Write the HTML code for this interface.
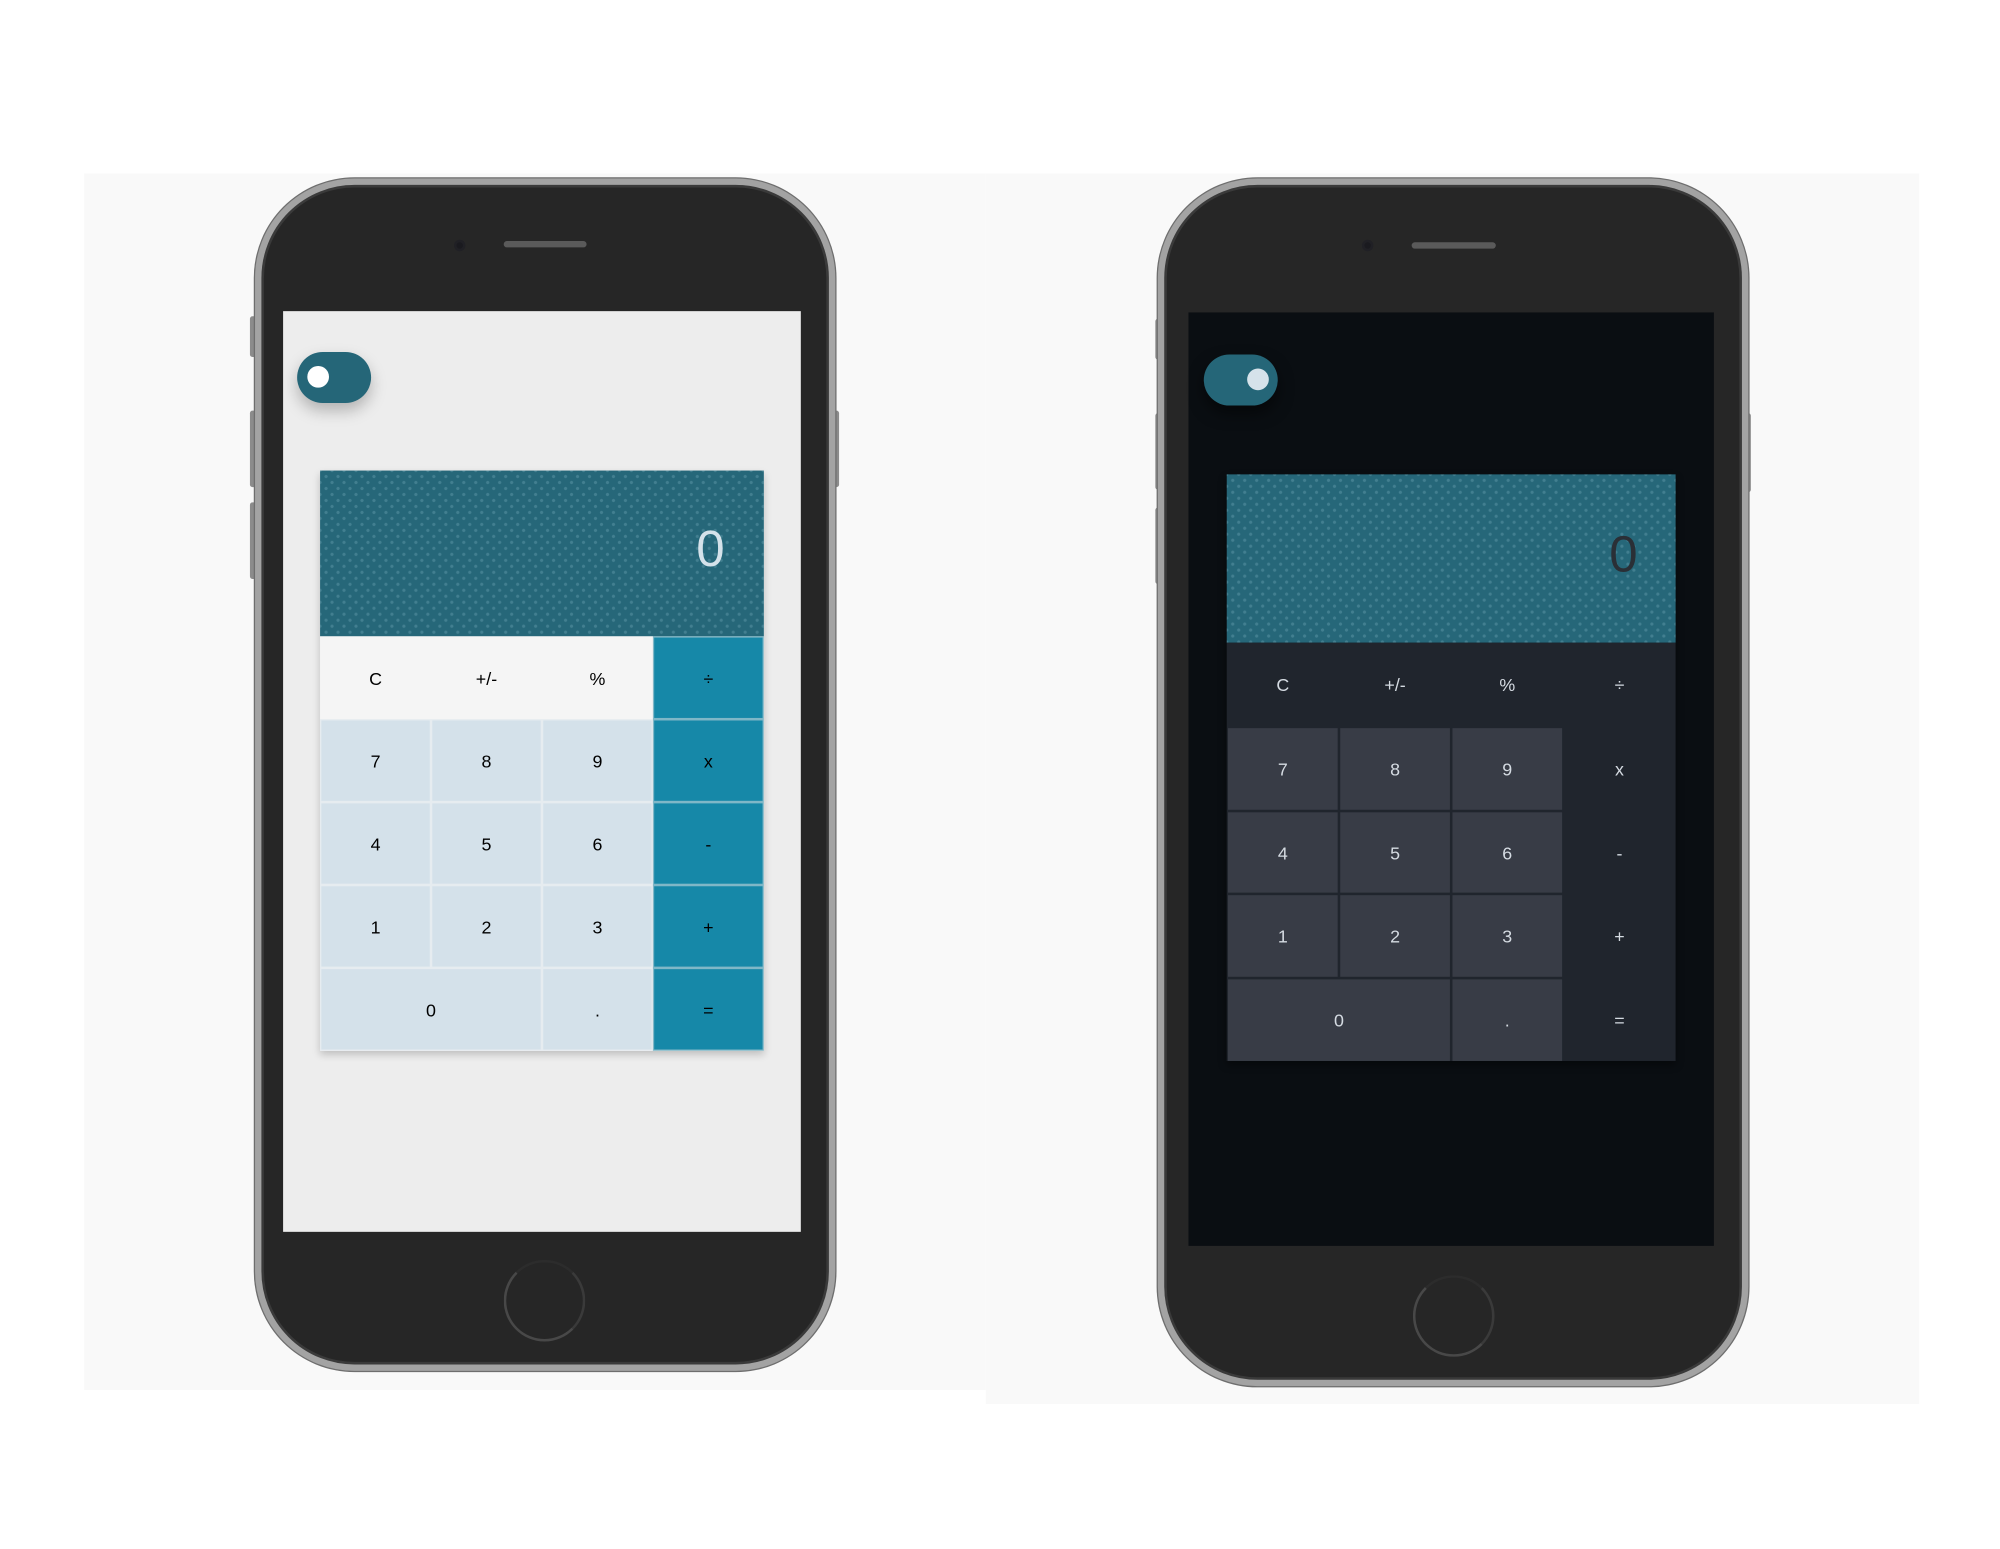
<!DOCTYPE html>
<html><head><meta charset="utf-8"><style>
*{margin:0;padding:0;box-sizing:border-box}
html,body{width:2000px;height:1545px;overflow:hidden;background:#fff;font-family:"Liberation Sans",sans-serif}
#w{position:absolute;left:0;top:0;width:1570px;height:1215px;transform:scale(1.2752);transform-origin:0 0}
.a{position:absolute}
.panel{background:#f9f9f9}
.phone{position:absolute;border-radius:78px;background:#262626;border:5px solid #a3a3a3;box-shadow:inset 0 0 0 2px #3a3a3a,0 0 0 1px #6e6e6e}
.btn{position:absolute;background:#8b8b8b;border-radius:2px}
.spk{position:absolute;height:5px;background:#5a5a5a;border-radius:3px}
.cam{position:absolute;width:9px;height:9px;border-radius:50%;background:#1a1a1f;border:2px solid #202025}
.home{position:absolute;width:64px;height:64px;border-radius:50%;border:2px solid #484848;border-top-color:#2c2c2c;border-right-color:#3a3a3a}
.tog{position:absolute;width:58px;height:40px;border-radius:20px;background:#256678;box-shadow:0 6px 12px rgba(0,0,0,.25)}
.knob{position:absolute;top:12px;width:17px;height:17px;border-radius:50%}
.disp{position:absolute;background-color:#266779;background-image:radial-gradient(circle,rgba(140,190,205,.28) 1px,transparent 1.5px),radial-gradient(circle,rgba(140,190,205,.28) 1px,transparent 1.5px);background-size:9.4px 9.4px;background-position:0 0,4.7px 4.7px}
.zero{position:absolute;font-size:40px;font-weight:300}
.k{position:absolute;display:flex;align-items:center;justify-content:center;font-size:14px}
</style></head><body><div id="w">
<div class="a panel" style="left:66px;top:136px;width:707px;height:954px"></div>
<div class="a panel" style="left:773px;top:136px;width:732px;height:965px"></div>

<!-- LEFT PHONE -->
<div class="btn" style="left:196px;top:248px;width:6px;height:32px"></div>
<div class="btn" style="left:196px;top:322px;width:6px;height:60px"></div>
<div class="btn" style="left:196px;top:394px;width:6px;height:60px"></div>
<div class="btn" style="left:652px;top:322px;width:6px;height:60px"></div>
<div class="phone" style="left:200px;top:140px;width:455px;height:935px"></div>
<div class="cam" style="left:356px;top:188px"></div>
<div class="spk" style="left:395px;top:189px;width:65px"></div>
<div class="a" style="left:222px;top:244px;width:406px;height:722px;background:#ededed"></div>
<div class="home" style="left:395px;top:988px"></div>
<div class="tog" style="left:233px;top:276px"><div class="knob" style="left:8px;top:11px;background:#fff"></div></div>
<div class="a" style="left:251px;top:369px;width:348px;height:455px;box-shadow:0 3px 6px rgba(0,0,0,.2)"></div>
<div class="disp" style="left:251px;top:369px;width:348px;height:130px"></div>
<div class="zero" style="left:546px;top:409px;color:#d5e2ea">0</div>

<!-- RIGHT PHONE -->
<div class="btn" style="left:906px;top:250px;width:6px;height:32px"></div>
<div class="btn" style="left:906px;top:324px;width:6px;height:60px"></div>
<div class="btn" style="left:906px;top:398px;width:6px;height:60px"></div>
<div class="btn" style="left:1367px;top:324px;width:6px;height:62px"></div>
<div class="phone" style="left:908px;top:140px;width:463px;height:947px"></div>
<div class="cam" style="left:1068px;top:188px"></div>
<div class="spk" style="left:1107px;top:190px;width:66px"></div>
<div class="a" style="left:932px;top:245px;width:412px;height:732px;background:#0a0e12"></div>
<div class="home" style="left:1108px;top:1000px"></div>
<div class="tog" style="left:944px;top:278px;box-shadow:0 6px 12px rgba(0,0,0,.5)"><div class="knob" style="left:34px;top:11px;background:#d5e2ea"></div></div>
<div class="a" style="left:962px;top:372px;width:352px;height:460px;box-shadow:0 3px 6px rgba(0,0,0,.4)"></div>
<div class="disp" style="left:962px;top:372px;width:352px;height:132px"></div>
<div class="zero" style="left:1262px;top:413px;color:#2a2f36">0</div>

<!-- LEFT KEYS -->
<div class="k" style="left:251px;top:499px;width:261px;height:65px;background:#f5f5f5"></div>
<div class="k" style="left:251px;top:499px;width:87px;height:65px">C</div>
<div class="k" style="left:338px;top:499px;width:87px;height:65px">+/-</div>
<div class="k" style="left:425px;top:499px;width:87px;height:65px">%</div>
<div class="k" style="left:251px;top:564px;width:261px;height:260px;background:#e6ecf0"></div>
<div class="k" style="left:252px;top:565px;width:85px;height:63px;background:#d4e1ea">7</div>
<div class="k" style="left:339px;top:565px;width:85px;height:63px;background:#d4e1ea">8</div>
<div class="k" style="left:426px;top:565px;width:85px;height:63px;background:#d4e1ea">9</div>
<div class="k" style="left:252px;top:630px;width:85px;height:63px;background:#d4e1ea">4</div>
<div class="k" style="left:339px;top:630px;width:85px;height:63px;background:#d4e1ea">5</div>
<div class="k" style="left:426px;top:630px;width:85px;height:63px;background:#d4e1ea">6</div>
<div class="k" style="left:252px;top:695px;width:85px;height:63px;background:#d4e1ea">1</div>
<div class="k" style="left:339px;top:695px;width:85px;height:63px;background:#d4e1ea">2</div>
<div class="k" style="left:426px;top:695px;width:85px;height:63px;background:#d4e1ea">3</div>
<div class="k" style="left:252px;top:760px;width:172px;height:63px;background:#d4e1ea">0</div>
<div class="k" style="left:426px;top:760px;width:85px;height:63px;background:#d4e1ea">.</div>
<div class="k" style="left:512px;top:499px;width:87px;height:325px;background:#7fb7c7"></div>
<div class="k" style="left:513px;top:500px;width:85px;height:63px;background:#1688a8">÷</div>
<div class="k" style="left:513px;top:565px;width:85px;height:63px;background:#1688a8">x</div>
<div class="k" style="left:513px;top:630px;width:85px;height:63px;background:#1688a8">-</div>
<div class="k" style="left:513px;top:695px;width:85px;height:63px;background:#1688a8">+</div>
<div class="k" style="left:513px;top:760px;width:85px;height:63px;background:#1688a8">=</div>

<!-- RIGHT KEYS -->
<div class="k" style="left:962px;top:504px;width:352px;height:328px;background:#20252d;color:#d5dbe2"></div>
<div class="k" style="left:962px;top:504px;width:88px;height:66px;color:#d5dbe2">C</div>
<div class="k" style="left:1050px;top:504px;width:88px;height:66px;color:#d5dbe2">+/-</div>
<div class="k" style="left:1138px;top:504px;width:88px;height:66px;color:#d5dbe2">%</div>
<div class="k" style="left:1226px;top:504px;width:88px;height:66px;color:#d5dbe2">÷</div>
<div class="k" style="left:963px;top:571px;width:86px;height:64px;background:#383c46;color:#d5dbe2">7</div>
<div class="k" style="left:1051px;top:571px;width:86px;height:64px;background:#383c46;color:#d5dbe2">8</div>
<div class="k" style="left:1139px;top:571px;width:86px;height:64px;background:#383c46;color:#d5dbe2">9</div>
<div class="k" style="left:963px;top:637px;width:86px;height:63px;background:#383c46;color:#d5dbe2">4</div>
<div class="k" style="left:1051px;top:637px;width:86px;height:63px;background:#383c46;color:#d5dbe2">5</div>
<div class="k" style="left:1139px;top:637px;width:86px;height:63px;background:#383c46;color:#d5dbe2">6</div>
<div class="k" style="left:963px;top:702px;width:86px;height:64px;background:#383c46;color:#d5dbe2">1</div>
<div class="k" style="left:1051px;top:702px;width:86px;height:64px;background:#383c46;color:#d5dbe2">2</div>
<div class="k" style="left:1139px;top:702px;width:86px;height:64px;background:#383c46;color:#d5dbe2">3</div>
<div class="k" style="left:963px;top:768px;width:174px;height:64px;background:#383c46;color:#d5dbe2">0</div>
<div class="k" style="left:1139px;top:768px;width:86px;height:64px;background:#383c46;color:#d5dbe2">.</div>
<div class="k" style="left:1226px;top:570px;width:88px;height:66px;color:#d5dbe2">x</div>
<div class="k" style="left:1226px;top:636px;width:88px;height:65px;color:#d5dbe2">-</div>
<div class="k" style="left:1226px;top:701px;width:88px;height:66px;color:#d5dbe2">+</div>
<div class="k" style="left:1226px;top:767px;width:88px;height:65px;color:#d5dbe2">=</div>
</div></body></html>
